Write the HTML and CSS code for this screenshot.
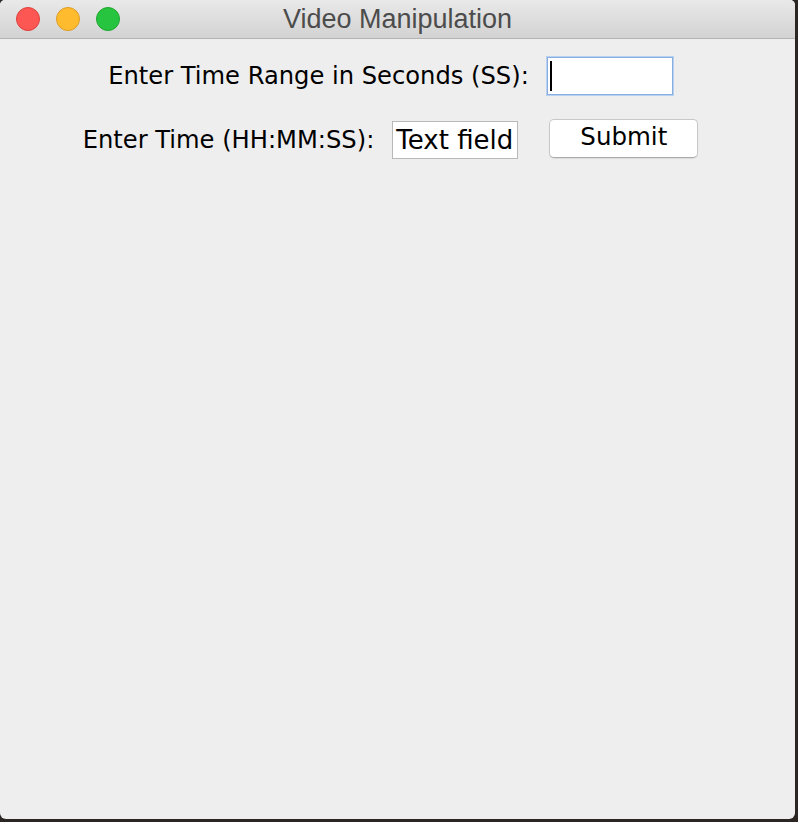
FILE: index.html
```html
<!DOCTYPE html>
<html>
<head>
<meta charset="utf-8">
<link rel="stylesheet" href="styles.css">
</head>
<body>
<div class="window">
  <div class="titlebar">
    <div class="lights">
      <span class="light red"></span>
      <span class="light yellow"></span>
      <span class="light green"></span>
    </div>
    <div class="title">Video Manipulation</div>
  </div>
  <div class="content">
    <div class="row row1">
      <span class="label">Enter Time Range in Seconds (SS):</span>
      <div class="field focused"><span class="caret"></span></div>
    </div>
    <div class="row row2">
      <span class="label">Enter Time (HH:MM:SS):</span>
      <div class="field plain">Text field</div>
      <button class="btn">Submit</button>
    </div>
  </div>
</div>
</body>
</html>
```
FILE: styles.css
```css
html, body {
  margin: 0;
  padding: 0;
  width: 798px;
  height: 822px;
  background: #2b2624;
  overflow: hidden;
}
.window {
  width: 795px;
  height: 819px;
  background: #eeeeee;
  border-radius: 5px 5px 6px 6px;
  display: flex;
  flex-direction: column;
  overflow: hidden;
}
.titlebar {
  height: 38px;
  flex: none;
  display: flex;
  align-items: center;
  position: relative;
  background: linear-gradient(#e9e9e9, #d2d2d2);
  border-bottom: 1px solid #b3b3b3;
}
.lights {
  display: flex;
  gap: 16px;
  padding-left: 16px;
}
.light {
  width: 24px;
  height: 24px;
  border-radius: 50%;
  box-sizing: border-box;
}
.red { background: #fd5754; border: 1px solid #de3f3b; }
.yellow { background: #fdbb2d; border: 1px solid #dd9d23; }
.green { background: #27c43f; border: 1px solid #1ea62f; }
.title {
  position: absolute;
  left: 0;
  right: 0;
  top: 0;
  height: 38px;
  line-height: 38px;
  text-align: center;
  font-family: "Liberation Sans", Arial, sans-serif;
  font-size: 27px;
  color: #4c4c4c;
  pointer-events: none;
}
.content {
  display: flex;
  flex-direction: column;
  align-items: center;
  padding-right: 14px;
  padding-top: 18px;
  font-family: "DejaVu Sans", sans-serif;
  font-size: 24.2px;
  color: #000;
}
.row {
  display: flex;
  align-items: center;
}
.row1 { gap: 18px; height: 38px; }
.row2 { gap: 18px; margin-top: 25px; height: 40px; }
.label { white-space: nowrap; }
.field {
  box-sizing: border-box;
  width: 126px;
  height: 38px;
  background: #fff;
  display: flex;
  align-items: center;
}
.focused {
  border: 1px solid #86aee3;
  box-shadow: 0 0 0 1px #b9d1f1;
  padding-left: 2px;
}
.caret {
  width: 2px;
  height: 30px;
  background: #000;
}
.plain {
  border: 1px solid #b8b8b8;
  padding-left: 3px;
  font-size: 26px;
  white-space: nowrap;
  overflow: hidden;
  margin-top: -1px;
}
.btn {
  box-sizing: border-box;
  margin-left: 13px;
  width: 149px;
  height: 39px;
  margin-top: -3px;
  background: #fff;
  border: 1px solid #c8c8c8;
  border-bottom-color: #aaaaaa;
  border-radius: 5px;
  box-shadow: 0 1px 1px rgba(0,0,0,0.08);
  font-family: "DejaVu Sans", sans-serif;
  font-size: 24.5px;
  color: #000;
  padding: 0 0 4px 0;
}
```
